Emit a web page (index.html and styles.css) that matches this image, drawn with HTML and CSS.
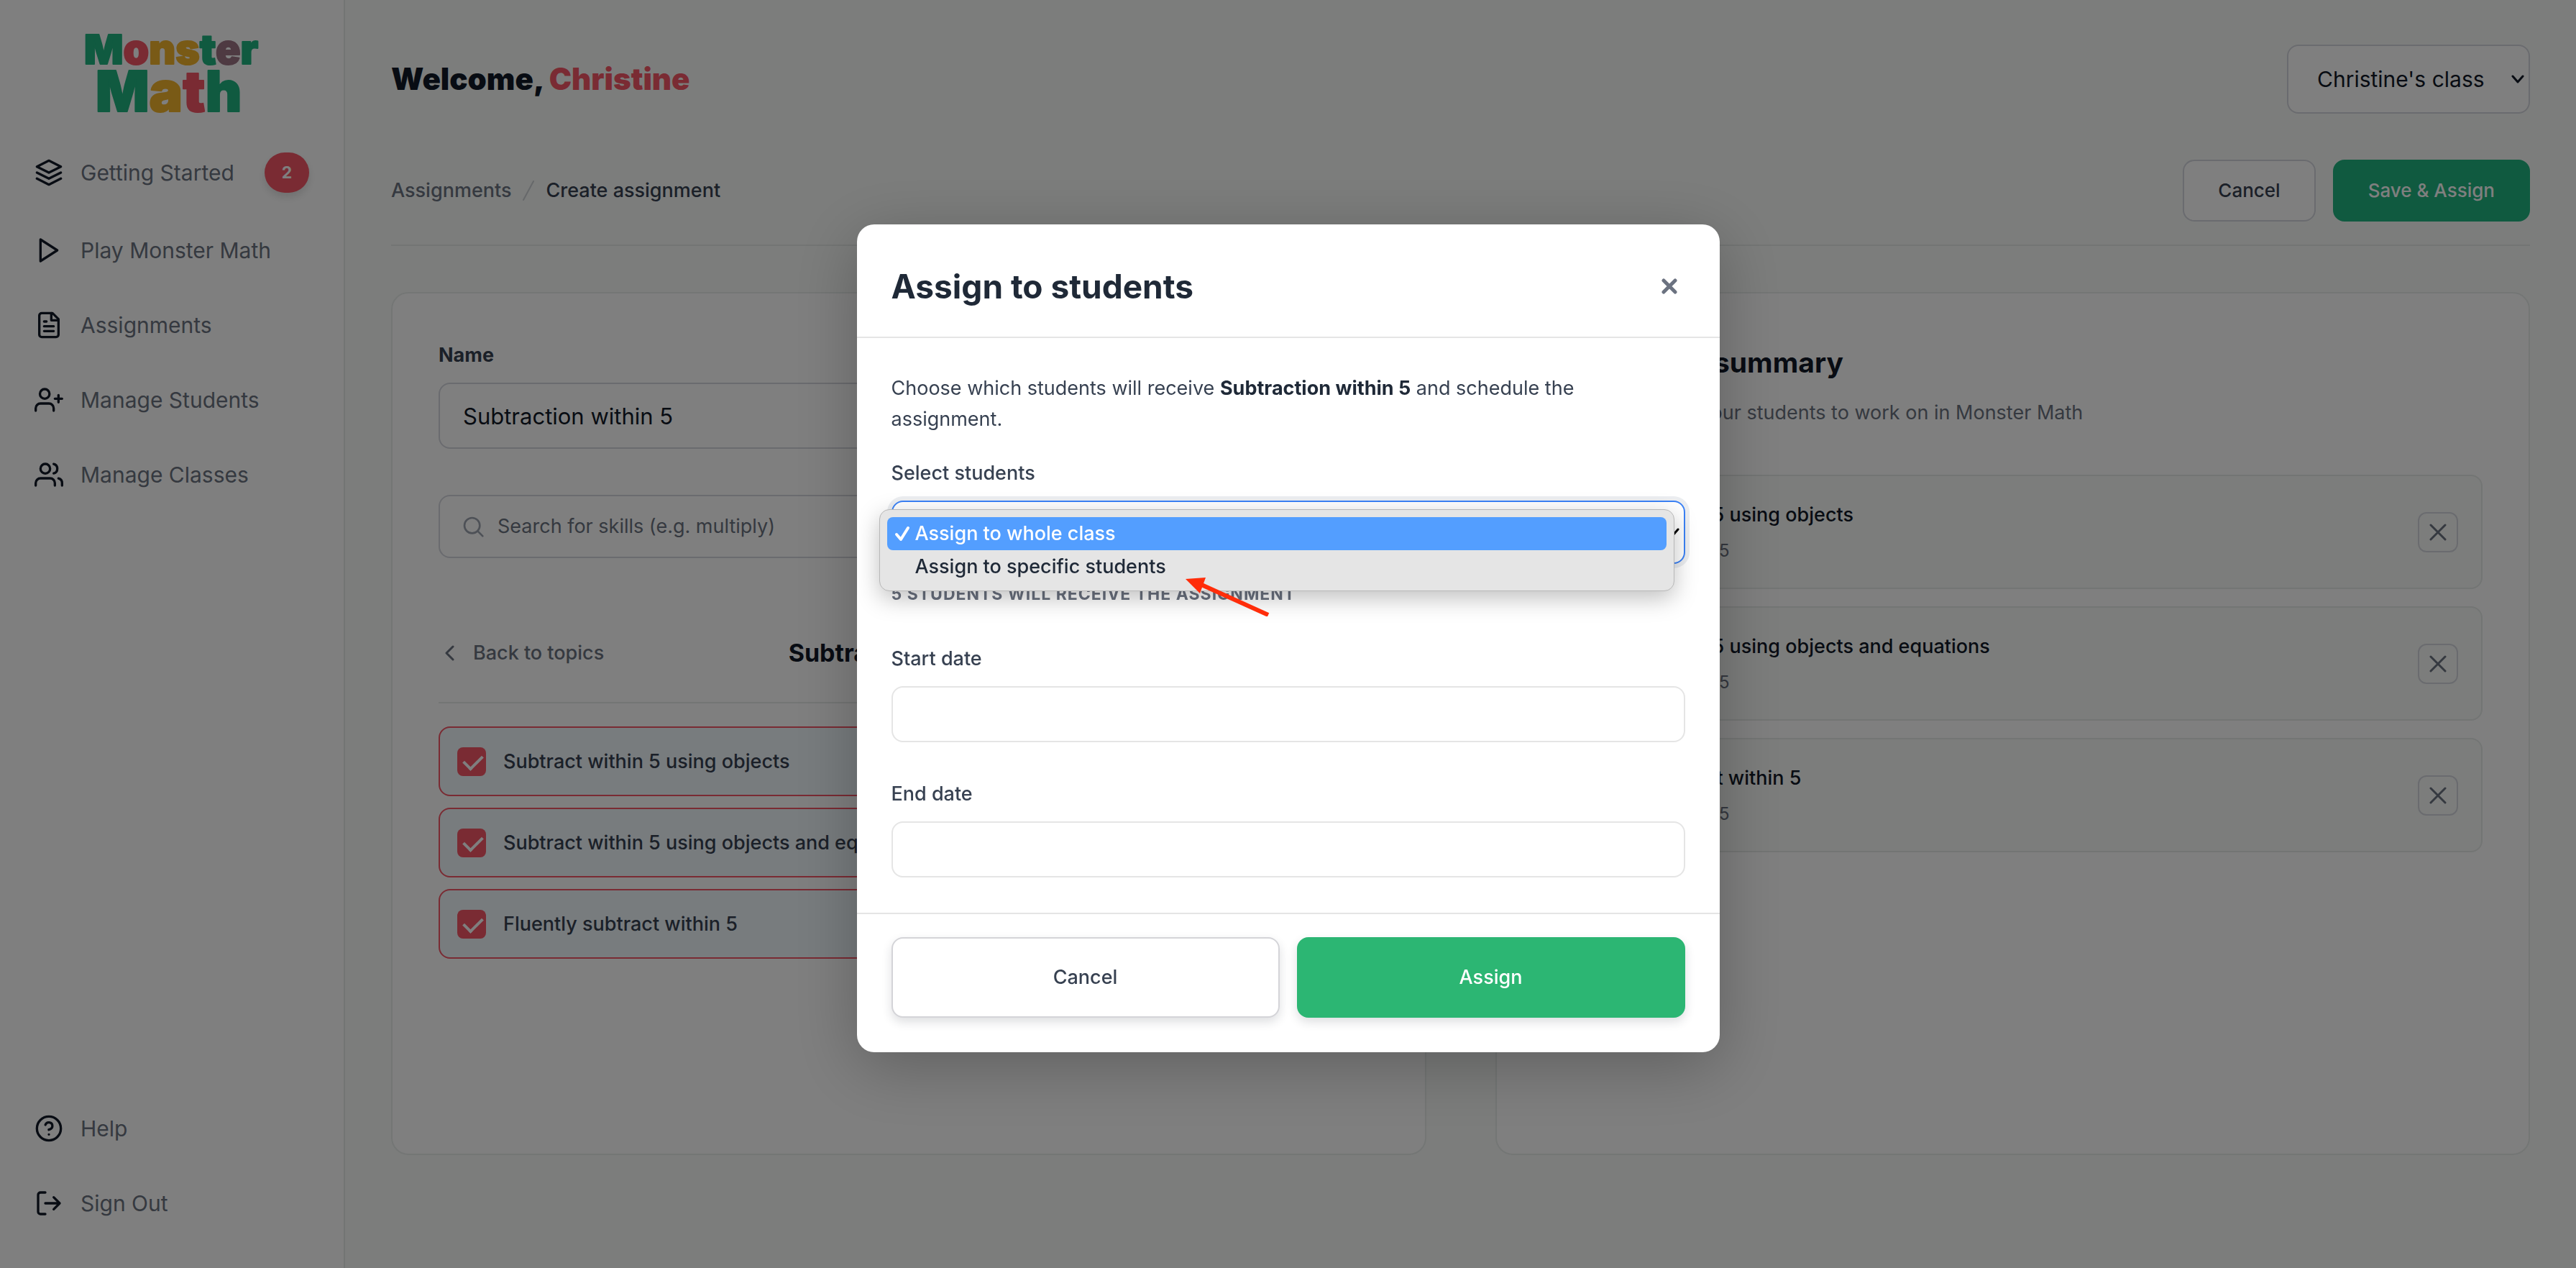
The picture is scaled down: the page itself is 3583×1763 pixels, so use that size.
FILE: index.html
```
<!DOCTYPE html>
<html lang="en">
<head>
  <meta charset="UTF-8">
  <meta name="viewport" content="width=device-width, initial-scale=1">
  <title>Monster Math - Create assignment</title>
  <link rel="stylesheet" href="styles.css">
</head>
<body>
<div class="page">
  <aside class="sidebar">
    <a class="logo" href="#" aria-label="Monster Math">
      <svg width="240" height="116" viewBox="0 0 240 116">
        <text x="-2" y="45" class="logo-top"><tspan class="green">M</tspan><tspan class="red">o</tspan><tspan class="yellow">ns</tspan><tspan class="green">t</tspan><tspan class="plum">e</tspan><tspan class="green">r</tspan></text>
        <text x="14" y="111" class="logo-bottom"><tspan class="green">M</tspan><tspan class="yellow">a</tspan><tspan class="red">t</tspan><tspan class="green">h</tspan></text>
      </svg>
    </a>
    <nav class="menu">
      <a class="menu-item" href="#">
        <svg class="icon" viewBox="0 0 24 24"><path d="M12 2 2 7l10 5 10-5z"/><path d="m2 12 10 5 10-5"/><path d="m2 17 10 5 10-5"/></svg>
        <span>Getting Started</span>
        <span class="badge">2</span>
      </a>
      <a class="menu-item" href="#">
        <svg class="icon" viewBox="0 0 24 24"><path d="m5 3 14 9-14 9z"/></svg>
        <span>Play Monster Math</span>
      </a>
      <a class="menu-item" href="#">
        <svg class="icon" viewBox="0 0 24 24"><path d="M15 2H6a2 2 0 0 0-2 2v16a2 2 0 0 0 2 2h12a2 2 0 0 0 2-2V7z"/><path d="M14 2v6h6M16 13H8M16 17H8M10 9H8"/></svg>
        <span>Assignments</span>
      </a>
      <a class="menu-item" href="#">
        <svg class="icon" viewBox="0 0 24 24"><path d="M16 21v-2a4 4 0 0 0-4-4H5a4 4 0 0 0-4 4v2"/><circle cx="8.5" cy="7" r="4"/><path d="M20 8v6M23 11h-6"/></svg>
        <span>Manage Students</span>
      </a>
      <a class="menu-item" href="#">
        <svg class="icon" viewBox="0 0 24 24"><path d="M17 21v-2a4 4 0 0 0-4-4H5a4 4 0 0 0-4 4v2"/><circle cx="9" cy="7" r="4"/><path d="M23 21v-2a4 4 0 0 0-3-3.87M16 3.13a4 4 0 0 1 0 7.75"/></svg>
        <span>Manage Classes</span>
      </a>
    </nav>
    <nav class="menu menu-bottom">
      <a class="menu-item" href="#">
        <svg class="icon" viewBox="0 0 24 24"><circle cx="12" cy="12" r="10"/><path d="M9.09 9a3 3 0 0 1 5.83 1c0 2-3 3-3 3M12 17h.01"/></svg>
        <span>Help</span>
      </a>
      <a class="menu-item" href="#">
        <svg class="icon" viewBox="0 0 24 24"><path d="M9 21H5a2 2 0 0 1-2-2V5a2 2 0 0 1 2-2h4M16 17l5-5-5-5M21 12H9"/></svg>
        <span>Sign Out</span>
      </a>
    </nav>
  </aside>

  <main class="main">
    <header class="header">
      <h1>Welcome, <span class="name">Christine</span></h1>
      <div class="select-box">
        <select class="class-select" aria-label="Class">
          <option>Christine's class</option>
        </select>
        <svg class="arrow-down" viewBox="0 0 18 12"><path d="m2 2 7 8 7-8"/></svg>
      </div>
    </header>

    <div class="toolbar">
      <div class="breadcrumb">
        <a href="#">Assignments</a>
        <svg class="slash" viewBox="0 0 16 28"><path d="M15 1 1 27"/></svg>
        <span>Create assignment</span>
      </div>
      <div class="toolbar-buttons">
        <button class="btn btn-light">Cancel</button>
        <button class="btn btn-green">Save &amp; Assign</button>
      </div>
    </div>

    <div class="cards">
      <section class="card">
        <label class="label" for="name">Name</label>
        <input class="input" id="name" type="text" value="Subtraction within 5">
        <div class="search">
          <svg class="search-icon" viewBox="0 0 24 24"><circle cx="11" cy="11" r="8"/><path d="m22 22-5-5"/></svg>
          <input type="text" aria-label="Search for skills" placeholder="Search for skills (e.g. multiply)">
        </div>
        <div class="topic">
          <a class="back" href="#">
            <svg viewBox="0 0 14 22"><path d="m12 2-9 9 9 9"/></svg>
            Back to topics
          </a>
          <h3>Subtraction within 5</h3>
        </div>
        <div class="skills">
          <label class="skill"><input type="checkbox" checked>Subtract within 5 using objects</label>
          <label class="skill"><input type="checkbox" checked>Subtract within 5 using objects and equations</label>
          <label class="skill"><input type="checkbox" checked>Fluently subtract within 5</label>
        </div>
      </section>

      <section class="card">
        <h2>Assignment summary</h2>
        <p class="card-text">Choose skills for your students to work on in Monster Math</p>
        <div class="summary">
          <div class="summary-item">
            <div>
              <p class="summary-title">Subtract within 5 using objects</p>
              <p class="summary-topic">Subtraction within 5</p>
            </div>
            <button class="remove" aria-label="Remove"><svg viewBox="0 0 24 24"><path d="M2 2l20 20M22 2 2 22"/></svg></button>
          </div>
          <div class="summary-item">
            <div>
              <p class="summary-title">Subtract within 5 using objects and equations</p>
              <p class="summary-topic">Subtraction within 5</p>
            </div>
            <button class="remove" aria-label="Remove"><svg viewBox="0 0 24 24"><path d="M2 2l20 20M22 2 2 22"/></svg></button>
          </div>
          <div class="summary-item">
            <div>
              <p class="summary-title">Fluently subtract within 5</p>
              <p class="summary-topic">Subtraction within 5</p>
            </div>
            <button class="remove" aria-label="Remove"><svg viewBox="0 0 24 24"><path d="M2 2l20 20M22 2 2 22"/></svg></button>
          </div>
        </div>
      </section>
    </div>
  </main>
</div>

<div class="overlay">
  <div class="modal" role="dialog" aria-labelledby="modal-title">
    <div class="modal-header">
      <h2 id="modal-title">Assign to students</h2>
      <button class="close" aria-label="Close"><svg viewBox="0 0 22 22"><path d="m3 3 16 16M19 3 3 19"/></svg></button>
    </div>
    <div class="modal-body">
      <p class="modal-text">Choose which students will receive <b>Subtraction within 5</b> and schedule the assignment.</p>
      <label class="modal-label" for="students">Select students</label>
      <div class="select-box students-box">
        <select class="students-select" id="students">
          <option>Assign to whole class</option>
          <option>Assign to specific students</option>
        </select>
        <svg class="arrow-down" viewBox="0 0 18 12"><path d="m2 2 7 8 7-8"/></svg>
        <ul class="options">
          <li class="option active"><svg viewBox="0 0 22 22"><path d="m3 12 6 7L19 3"/></svg>Assign to whole class</li>
          <li class="option">Assign to specific students</li>
        </ul>
        <svg class="pointer" viewBox="0 0 118 56"><path class="pointer-line" d="m20 11 95 43"/><path class="pointer-head" d="m0 4 28-2-8 22z"/></svg>
      </div>
      <p class="hint">5 students will receive the assignment</p>
      <div class="field">
        <label class="modal-label" for="start">Start date</label>
        <input class="date" id="start" type="text">
      </div>
      <div class="field">
        <label class="modal-label" for="end">End date</label>
        <input class="date" id="end" type="text">
      </div>
    </div>
    <div class="modal-footer">
      <button class="modal-btn cancel">Cancel</button>
      <button class="modal-btn assign">Assign</button>
    </div>
  </div>
</div>
</body>
</html>
```
FILE: styles.css
```
*{
  box-sizing: border-box;
  margin: 0;
  padding: 0;
}
body{
  font-family: Inter, "Open Sans", sans-serif;
  font-size: 27px;
  line-height: 44px;
  color: #111827;
  background: #f8fbf9;
}
input, select, button{
  font: inherit;
  color: inherit;
}
a{
  color: inherit;
  text-decoration: none;
}
svg{
  display: block;
  flex-shrink: 0;
  fill: none;
  stroke: currentColor;
  stroke-linecap: round;
  stroke-linejoin: round;
}
.page{
  display: flex;
  min-height: 100vh;
}

/* sidebar */
.sidebar{
  display: flex;
  flex-direction: column;
  width: 480px;
  flex-shrink: 0;
  padding-bottom: 38px;
  background: white;
  border-right: 2px solid #e6eae8;
}
.logo{
  display: flex;
  justify-content: center;
  padding: 44px 0 24px;
}
.logo svg{
  overflow: visible;
  stroke-width: 2;
}
.logo-top{
  font-size: 57px;
  font-weight: 900;
}
.logo-bottom{
  font-size: 78px;
  font-weight: 900;
}
.green{
  fill: #20b480;
  stroke: #20b480;
}
.red{
  fill: #f45666;
  stroke: #f45666;
}
.yellow{
  fill: #f2b42c;
  stroke: #f2b42c;
}
.plum{
  fill: #9c7484;
  stroke: #9c7484;
}
.menu-item{
  display: flex;
  align-items: center;
  gap: 24px;
  padding: 28px 48px;
  font-size: 30px;
  line-height: 48px;
  color: #6b7280;
}
.menu-bottom{
  margin-top: auto;
}
.icon{
  width: 40px;
  height: 40px;
  stroke: #111827;
  stroke-width: 2;
}
.badge{
  width: 62px;
  margin-left: auto;
  border-radius: 28px;
  background: #f45666;
  color: white;
  font-size: 23px;
  font-weight: 700;
  line-height: 56px;
  text-align: center;
  box-shadow: 0 6px 12px rgba(0,0,0,.12);
}

/* main part */
.main{
  flex: 1;
  min-width: 0;
  padding: 62px 64px;
}
.header{
  display: flex;
  justify-content: space-between;
  align-items: center;
}
h1{
  font-size: 42px;
  font-weight: 900;
  line-height: 60px;
}
.name{
  color: #f45666;
}
.select-box{
  position: relative;
}
select{
  appearance: none;
  background: white;
  border: 2px solid #d5d7de;
  border-radius: 16px;
}
.class-select{
  width: 338px;
  height: 96px;
  padding-left: 40px;
  font-size: 30px;
}
.arrow-down{
  position: absolute;
  top: 50%;
  right: 8px;
  width: 18px;
  height: 12px;
  margin-top: -6px;
  stroke-width: 3;
  pointer-events: none;
}
.toolbar{
  display: flex;
  justify-content: space-between;
  align-items: center;
  margin: 64px 0;
  padding-bottom: 32px;
  border-bottom: 2px solid #e6eae8;
  font-weight: 500;
}
.breadcrumb{
  display: flex;
  align-items: center;
  gap: 16px;
  color: #374151;
}
.breadcrumb a{
  color: #6b7280;
}
.slash{
  width: 16px;
  height: 28px;
  stroke: #cdd0d4;
  stroke-width: 2;
}
.toolbar-buttons{
  display: flex;
  gap: 24px;
}
button{
  cursor: pointer;
}
.btn{
  height: 86px;
  padding: 0 47px;
  border: 2px solid #d5d7de;
  border-radius: 16px;
  background: white;
  font-size: 26px;
  font-weight: 500;
  color: #374151;
}
.btn-green{
  background: #20b480;
  border-color: #20b480;
  color: white;
}
.cards{
  display: grid;
  grid-template-columns: 1fr 1fr;
  gap: 96px;
}
.card{
  min-height: 1200px;
  padding: 64px;
  background: white;
  border: 2px solid #e8edeb;
  border-radius: 24px;
}
.label{
  display: block;
  margin-bottom: 16px;
  font-weight: 700;
  color: #374151;
}
.input{
  width: 100%;
  height: 92px;
  padding: 0 32px;
  border: 2px solid #d5d7de;
  border-radius: 16px;
  font-size: 31px;
}
.search{
  display: flex;
  align-items: center;
  gap: 18px;
  height: 88px;
  margin-top: 64px;
  padding: 0 30px;
  border: 2px solid #d5d7de;
  border-radius: 16px;
}
.search input{
  flex: 1;
  border: none;
  outline: none;
  background: none;
}
.search input::placeholder{
  color: #6b7280;
}
.search-icon{
  width: 32px;
  height: 32px;
  stroke: #9ca3af;
  stroke-width: 2;
}
.topic{
  display: grid;
  grid-template-columns: 1fr auto 1fr;
  align-items: center;
  margin-top: 108px;
  padding-bottom: 44px;
  border-bottom: 2px solid #e6eae8;
}
.back{
  display: flex;
  align-items: center;
  gap: 26px;
  padding-left: 8px;
  font-weight: 500;
  color: #6b7280;
}
.back svg{
  width: 14px;
  height: 22px;
  stroke-width: 3;
}
h3{
  font-size: 34px;
  line-height: 48px;
}
.skills{
  display: flex;
  flex-direction: column;
  gap: 16px;
  margin-top: 32px;
}
.skill{
  display: flex;
  align-items: center;
  gap: 24px;
  height: 97px;
  padding: 0 24px;
  background: #f0f8fd;
  border: 2px solid #f45666;
  border-radius: 16px;
  font-weight: 500;
  color: #374151;
}
.skill input{
  appearance: none;
  position: relative;
  width: 40px;
  height: 40px;
  border-radius: 8px;
  background: #f45666;
}
.skill input:checked::after{
  content: "";
  position: absolute;
  top: 5px;
  left: 14px;
  width: 12px;
  height: 22px;
  border: solid white;
  border-width: 0 4px 4px 0;
  transform: rotate(45deg);
}
.card h2{
  font-size: 39px;
  line-height: 64px;
}
.card-text{
  margin-top: 16px;
  color: #6b7280;
}
.summary{
  display: flex;
  flex-direction: column;
  gap: 24px;
  margin-top: 64px;
}
.summary-item{
  display: flex;
  justify-content: space-between;
  align-items: center;
  padding: 33px 32px;
  background: #f8fbf9;
  border: 2px solid #e6eae8;
  border-radius: 16px;
}
.summary-title{
  font-weight: 500;
  line-height: 42px;
}
.summary-topic{
  margin-top: 11px;
  font-size: 24px;
  line-height: 36px;
  color: #6b7280;
}
.remove{
  width: 56px;
  height: 56px;
  padding: 14px;
  background: none;
  border: 2px solid #d5d7de;
  border-radius: 12px;
  color: #6b7280;
}
.remove svg{
  width: 24px;
  height: 24px;
  stroke-width: 3;
}

/* modal */
.overlay{
  position: fixed;
  inset: 0;
  display: flex;
  justify-content: center;
  align-items: flex-start;
  padding-top: 312px;
  background: rgba(0,0,0,.5);
}
.modal{
  width: 1200px;
  background: white;
  border-radius: 24px;
  box-shadow: 0 20px 90px rgba(0,0,0,.25);
  color: #374151;
}
.modal-header{
  display: flex;
  justify-content: space-between;
  align-items: center;
  padding: 56px 48px 40px;
  border-bottom: 2px solid #e5e5e5;
}
.modal-header h2{
  font-size: 46px;
  line-height: 60px;
  color: #1f2937;
}
.close{
  width: 44px;
  height: 44px;
  padding: 11px;
  border: none;
  background: none;
  color: #6b7280;
}
.close svg{
  width: 22px;
  height: 22px;
  stroke-width: 5;
}
.modal-body{
  padding: 48px 48px 49px;
}
.modal-text{
  margin-bottom: 32px;
  line-height: 43px;
}
.modal-text b{
  color: #1f2937;
}
.modal-label{
  display: block;
  margin-bottom: 16px;
  font-weight: 500;
}
.students-select{
  display: block;
  width: 100%;
  height: 88px;
  padding: 0 32px;
  border-color: #3b82f6;
  outline: none;
  box-shadow: 0 0 0 6px #eceef1;
}
.students-box .arrow-down{
  color: black;
}
.options{
  position: absolute;
  top: 12px;
  left: -17px;
  right: 15px;
  padding: 10px;
  list-style: none;
  background: #e5e5e5;
  border: 1px solid #b8b8b8;
  border-radius: 14px;
  box-shadow: 0 10px 32px rgba(0,0,0,.25);
  color: #1f2937;
}
.option{
  display: flex;
  align-items: center;
  padding-left: 39px;
  border-radius: 8px;
  font-weight: 500;
  line-height: 46px;
}
.option.active{
  gap: 7px;
  padding-left: 10px;
  background: #539eff;
  color: white;
}
.option svg{
  width: 22px;
  height: 22px;
  stroke-width: 4;
}
.pointer{
  position: absolute;
  top: 105px;
  left: 409px;
  width: 118px;
  height: 56px;
  color: #ff2d0a;
}
.pointer-line{
  stroke-width: 6;
  stroke-linecap: butt;
}
.pointer-head{
  fill: #ff2d0a;
  stroke: none;
}
.hint{
  margin: 24px 0 50px;
  font-size: 23px;
  font-weight: 700;
  line-height: 36px;
  letter-spacing: 1px;
  text-transform: uppercase;
  color: #6b7280;
}
.field + .field{
  margin-top: 50px;
}
.date{
  display: block;
  width: 100%;
  height: 78px;
  padding: 0 24px;
  border: 2px solid #e5e5e5;
  border-radius: 16px;
}
.modal-footer{
  display: grid;
  grid-template-columns: 1fr 1fr;
  gap: 24px;
  padding: 32px 48px 48px;
  border-top: 2px solid #e5e5e5;
}
.modal-btn{
  height: 112px;
  border: 2px solid #d4d4d8;
  border-radius: 16px;
  background: white;
  font-weight: 500;
  box-shadow: 0 6px 14px rgba(31,41,55,.15);
}
.assign{
  background: #2cb673;
  border-color: #2cb673;
  color: white;
}
```
